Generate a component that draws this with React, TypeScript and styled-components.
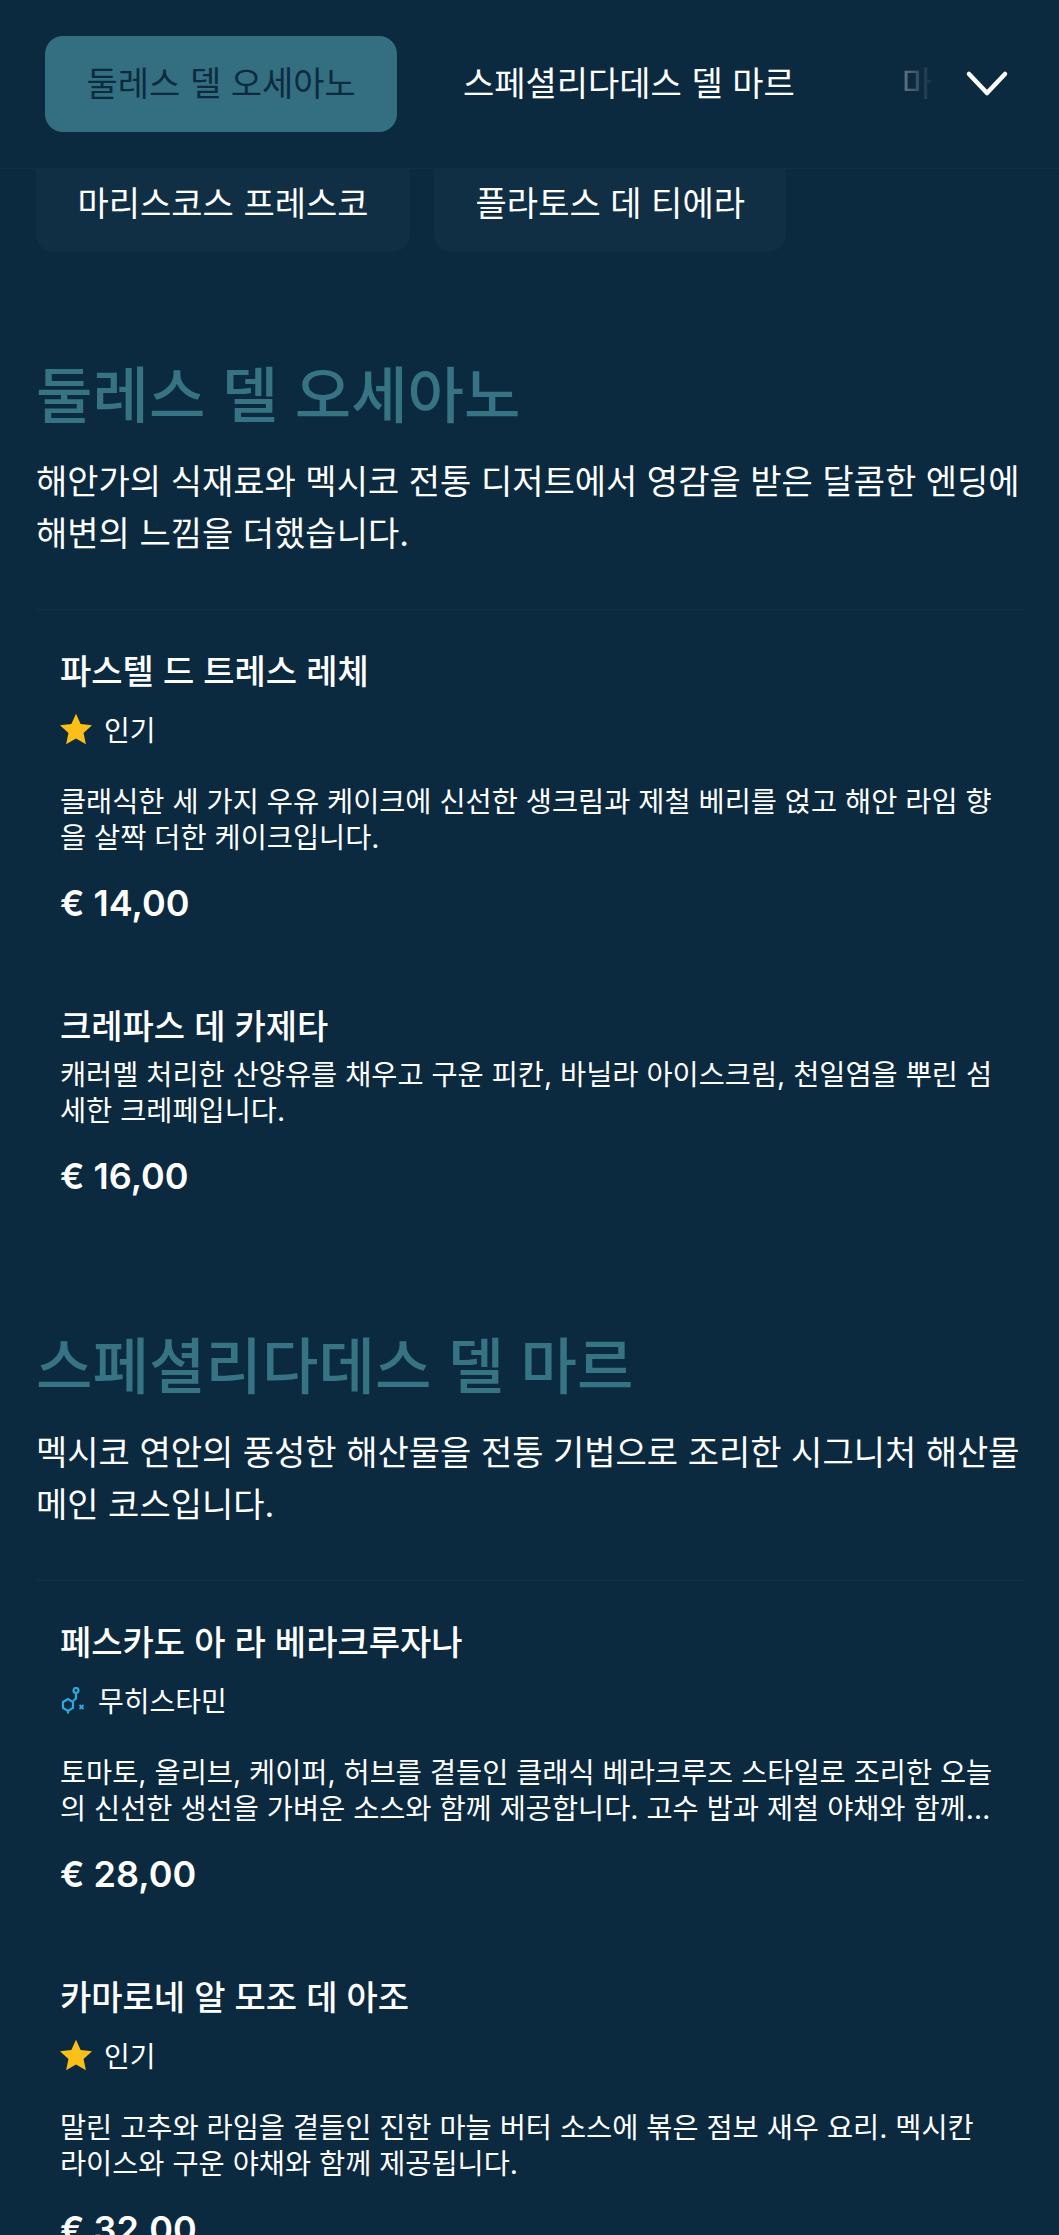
import React, {FC} from 'react';
import styled, {createGlobalStyle} from 'styled-components';

const Global = createGlobalStyle`
  html, body {
    margin: 0;
    padding: 0;
    background: #0b2a3f;
  }
  body {
    height: 2235px;
    overflow: hidden;
    font-family: Inter, "Noto Sans CJK KR", sans-serif;
    color: #fff;
  }
  * { box-sizing: border-box; }
`

const Page = styled.div`
  height: 2235px;
  overflow: hidden;
  background: #0b2a3f;
`
const Header = styled.header`
  position: relative;
  height: 169px;
  display: flex;
  align-items: flex-start;
  padding: 36px 0 0 45px;
  border-bottom: 1px solid #102f44;
  overflow: hidden;
`
const Tab = styled.button<{$active?: boolean}>`
  flex: none;
  height: 96px;
  padding: 0 41.5px 6px;
  margin-right: 24px;
  border: 0;
  border-radius: 18px;
  font: 400 34px Inter, "Noto Sans CJK KR", sans-serif;
  color: ${p => (p.$active ? '#0c2b40' : '#fff')};
  background: ${p => (p.$active ? '#336f81' : 'transparent')};
  white-space: nowrap;
`
const Fade = styled.div`
  position: absolute;
  top: 0;
  right: 0;
  bottom: 0;
  width: 160px;
  display: flex;
  align-items: center;
  padding: 0 0 2px 0;
  background: linear-gradient(to right, rgba(11, 42, 63, 0.6) 0, #0b2a3f 22%);
`
const Chevron = styled.svg`
  margin-left: 66px;
  width: 44px;
  height: 28px;
`
const SubTabs = styled.div`
  height: 83px;
  display: flex;
  gap: 24px;
  padding-left: 36px;
  overflow: hidden;
  align-items: flex-end;
`
const SubTab = styled.div`
  flex: none;
  height: 110px;
  padding: 0 41.5px 26px;
  display: flex;
  align-items: flex-end;
  background: #102f44;
  border-radius: 18px;
  font-size: 34px;
  line-height: 44px;
`
const Section = styled.section<{$first?: boolean}>`
  padding: 0 36px;
  margin-top: ${p => (p.$first ? 108 : 94)}px;
`
const SectionTitle = styled.h2`
  margin: 0 0 24px;
  font-size: 61.4px;
  line-height: 72px;
  font-weight: 500;
  color: #367383;
`
const SectionDesc = styled.p`
  margin: 0 0 49px;
  font-size: 34px;
  line-height: 52px;
`
const Item = styled.article<{$inner?: boolean}>`
  border-top: 1px solid ${p => (p.$inner ? '#0d2c41' : '#113045')};
  padding: 40px 24px 39px;
`
const ItemTitle = styled.h3<{$tight?: boolean}>`
  margin: 0 0 ${p => (p.$tight ? 8 : 17)}px;
  font-size: 34px;
  line-height: 44px;
  font-weight: 500;
`
const Tag = styled.div`
  display: flex;
  align-items: center;
  gap: 12px;
  height: 36px;
  margin-bottom: 37px;
  font-size: 28px;
`
const TagIcon = styled.svg<{$w: number; $h: number}>`
  width: ${p => p.$w}px;
  height: ${p => p.$h}px;
  flex: none;
`
const ItemDesc = styled.p`
  margin: 0 0 25px;
  font-size: 28.4px;
  line-height: 36px;
  display: -webkit-box;
  -webkit-line-clamp: 2;
  -webkit-box-orient: vertical;
  overflow: hidden;
`
const Price = styled.div`
  font-size: 36px;
  line-height: 44px;
  font-weight: 600;
`

const Star: FC = () => (
  <TagIcon $w={32} $h={32} viewBox="1 1 22 22">
    <path
      fill="#fbbf1a"
      d="M12 1.500l3.200 7.100 7.800.9-5.800 5.200 1.600 7.700L12 18.500l-6.800 3.900 1.600-7.700L1 9.500l7.800-.9z"
    />
  </TagIcon>
)

const NoHistamine: FC = () => (
  <TagIcon $w={26} $h={27} viewBox="0 0 24 27" fill="none" stroke="#2fa8dc" strokeWidth="2.200">
    <path d="M2 15l5-3 5 3v6l-5 3-5-3z" />
    <path d="M12 14l3-2.500V6" />
    <circle cx="15" cy="3.500" r="2.500" />
    <path d="M7 24v2.500" />
    <path d="M18.500 18l4 4M22.500 18l-4 4" strokeWidth="1.800" />
  </TagIcon>
)

export default function App() {
  return (
    <Page>
      <Global />
      <Header>
        <Tab $active>둘레스 델 오세아노</Tab>
        <Tab>스페셜리다데스 델 마르</Tab>
        <Tab>마리스코스 프레스코</Tab>
        <Fade>
          <Chevron viewBox="0 0 44 28" fill="none" stroke="#fff" strokeWidth="4.500" strokeLinecap="round" strokeLinejoin="round">
            <path d="M4 5l18 19L40 5" />
          </Chevron>
        </Fade>
      </Header>
      <SubTabs>
        <SubTab>마리스코스 프레스코</SubTab>
        <SubTab>플라토스 데 티에라</SubTab>
      </SubTabs>

      <Section $first>
        <SectionTitle>둘레스 델 오세아노</SectionTitle>
        <SectionDesc>해안가의 식재료와 멕시코 전통 디저트에서 영감을 받은 달콤한 엔딩에 해변의 느낌을 더했습니다.</SectionDesc>
        <Item>
          <ItemTitle>파스텔 드 트레스 레체</ItemTitle>
          <Tag><Star />인기</Tag>
          <ItemDesc>클래식한 세 가지 우유 케이크에 신선한 생크림과 제철 베리를 얹고 해안 라임 향을 살짝 더한 케이크입니다.</ItemDesc>
          <Price>€ 14,00</Price>
        </Item>
        <Item $inner>
          <ItemTitle $tight>크레파스 데 카제타</ItemTitle>
          <ItemDesc>캐러멜 처리한 산양유를 채우고 구운 피칸, 바닐라 아이스크림, 천일염을 뿌린 섬세한 크레페입니다.</ItemDesc>
          <Price>€ 16,00</Price>
        </Item>
      </Section>

      <Section>
        <SectionTitle>스페셜리다데스 델 마르</SectionTitle>
        <SectionDesc>멕시코 연안의 풍성한 해산물을 전통 기법으로 조리한 시그니처 해산물 메인 코스입니다.</SectionDesc>
        <Item>
          <ItemTitle>페스카도 아 라 베라크루자나</ItemTitle>
          <Tag><NoHistamine />무히스타민</Tag>
          <ItemDesc>토마토, 올리브, 케이퍼, 허브를 곁들인 클래식 베라크루즈 스타일로 조리한 오늘의 신선한 생선을 가벼운 소스와 함께 제공합니다. 고수 밥과 제철 야채와 함께 제공되며 가볍게 즐기기 좋은 요리입니다.</ItemDesc>
          <Price>€ 28,00</Price>
        </Item>
        <Item $inner>
          <ItemTitle>카마로네 알 모조 데 아조</ItemTitle>
          <Tag><Star />인기</Tag>
          <ItemDesc>말린 고추와 라임을 곁들인 진한 마늘 버터 소스에 볶은 점보 새우 요리. 멕시칸 라이스와 구운 야채와 함께 제공됩니다.</ItemDesc>
          <Price>€ 32,00</Price>
        </Item>
      </Section>
    </Page>
  );
}
